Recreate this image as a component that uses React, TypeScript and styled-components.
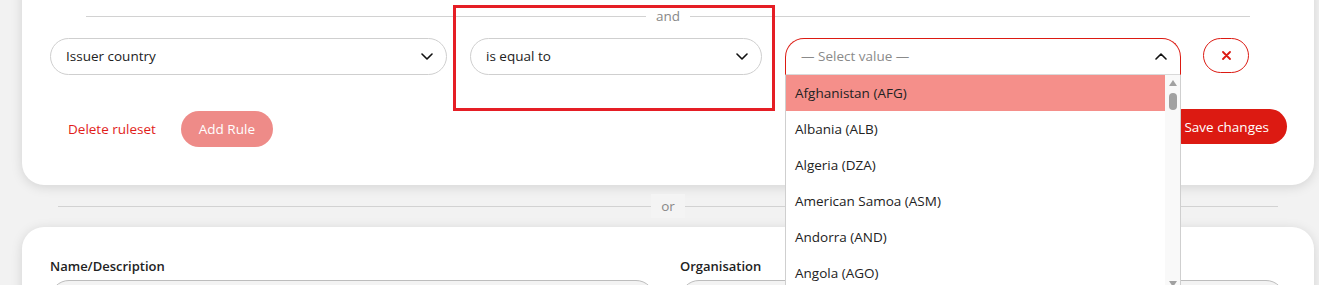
import React from "react";
import styled, { createGlobalStyle } from "styled-components";

const GlobalStyle = createGlobalStyle`
  html, body { margin: 0; padding: 0; background: #f2f2f2; }
  body { font-family: "Open Sans", "Noto Sans", sans-serif; font-size: 13.5px; color: #222; overflow: hidden; }
  * { box-sizing: border-box; }
`;

const RED = "#dc1a12";

const Page = styled.div`
  position: relative;
  width: 1319px;
  height: 285px;
  overflow: hidden;
`;

const Stack = styled.div`
  display: flex;
  flex-direction: column;
  margin-top: -30px;
  padding: 0 5px 0 22px;
`;

const Card = styled.section<{ $pt: number; $pb: number }>`
  background: #fff;
  border-radius: 22px;
  box-shadow: 0 2px 12px rgba(0, 0, 0, 0.13);
  padding: ${(p) => p.$pt}px 28px ${(p) => p.$pb}px 28px;
`;

const Divider = styled.div<{ $inset: number; $h: number }>`
  display: flex;
  align-items: center;
  height: ${(p) => p.$h}px;
  padding: 0 ${(p) => p.$inset}px;
  &::before, &::after {
    content: "";
    flex: 1;
    height: 1px;
    background: #d2d2d2;
  }
`;

const DividerLabel = styled.span<{ $bg: string }>`
  color: #888;
  font-size: 13.5px;
  line-height: 18px;
  padding: 3px 10px;
  background: ${(p) => p.$bg};
`;

const RuleRow = styled.div`
  display: flex;
  align-items: flex-start;
  gap: 23px;
  margin-top: 13px;
`;

const SelectBox = styled.div<{ $w: number; $open?: boolean }>`
  width: ${(p) => p.$w}px;
  height: 37px;
  display: flex;
  align-items: center;
  justify-content: space-between;
  padding: 0 13px 1px 15px;
  border: 1px solid ${(p) => (p.$open ? RED : "#cfcfcf")};
  border-bottom-color: ${(p) => (p.$open ? "#d9d9d9" : "#cfcfcf")};
  border-radius: ${(p) => (p.$open ? "19px 19px 0 0" : "19px")};
  background: #fff;
  color: #222;
  font-size: 13.5px;
`;

const Placeholder = styled.span`
  color: #8a8a8a;
`;

const SelectWrap = styled.div`
  position: relative;
  display: flex;
`;

const RemoveButton = styled.button`
  width: 46px;
  height: 35px;
  margin-left: -1px;
  border: 1px solid ${RED};
  border-radius: 18px;
  background: #fff;
  display: flex;
  align-items: center;
  justify-content: center;
  padding: 0;
`;

const Dropdown = styled.div`
  position: absolute;
  top: 100%;
  left: 0;
  width: 100%;
  height: 216px;
  display: flex;
  background: #fff;
  border-left: 1px solid #cfcfcf;
  border-right: 1px solid #cfcfcf;
  z-index: 5;
`;

const Options = styled.ul`
  flex: 1;
  margin: 0;
  padding: 0;
  list-style: none;
`;

const Option = styled.li<{ $active?: boolean }>`
  height: 36px;
  display: flex;
  align-items: center;
  padding-left: 9px;
  font-size: 13.5px;
  color: #222;
  background: ${(p) => (p.$active ? "#f58f8a" : "#fff")};
`;

const Scrollbar = styled.div`
  width: 15px;
  background: #f9f9f9;
  display: flex;
  flex-direction: column;
  align-items: center;
  padding: 5px 0 4px;
`;

const Thumb = styled.div`
  width: 8px;
  height: 17px;
  border-radius: 4px;
  background: #a1a1a1;
  margin-top: 7px;
`;

const ScrollSpacer = styled.div`
  flex: 1;
`;

const Actions = styled.div`
  display: flex;
  align-items: flex-start;
  margin-top: 34px;
`;

const LeftActions = styled.div`
  display: flex;
  align-items: center;
  gap: 7px;
  margin-top: 2px;
`;

const LinkButton = styled.button`
  border: 0;
  background: none;
  color: #e11d1a;
  font-family: inherit;
  font-size: 13.5px;
  padding: 0 18px;
  height: 36px;
`;

const PillButton = styled.button<{ $bg: string; $w: number; $h: number }>`
  border: 0;
  background: ${(p) => p.$bg};
  color: #fff;
  font-family: inherit;
  font-size: 13.5px;
  width: ${(p) => p.$w}px;
  height: ${(p) => p.$h}px;
  border-radius: 18px;
  padding: 0;
`;

const SaveButton = styled(PillButton)`
  margin-left: auto;
  margin-right: -1px;
  text-align: right;
  padding-right: 18px;
`;

const FieldGrid = styled.div`
  display: grid;
  grid-template-columns: 605px 605px;
  column-gap: 25px;
`;

const Field = styled.div`
  display: flex;
  flex-direction: column;
`;

const Label = styled.label`
  font-weight: 600;
  font-size: 13px;
  line-height: 18px;
  color: #222;
  margin-bottom: 5px;
`;

const Input = styled.div`
  height: 38px;
  border: 1px solid #bdbdbd;
  border-radius: 19px;
  background: #f3f3f3;
`;

const Annotation = styled.div`
  position: absolute;
  left: 453px;
  top: 5px;
  width: 322px;
  height: 106px;
  border: 3px solid #e51e25;
  pointer-events: none;
  z-index: 10;
`;

const Chevron = ({ up }: { up?: boolean }) => (
  <svg width="12" height="7" viewBox="0 0 12 7" fill="none">
    <polyline
      points={up ? "1,6 6,1 11,6" : "1,1 6,6 11,1"}
      stroke="#111"
      strokeWidth="1.6"
      strokeLinecap="round"
      strokeLinejoin="round"
    />
  </svg>
);

const Cross = () => (
  <svg width="9" height="9" viewBox="0 0 9 9">
    <path d="M1 1 L8 8 M8 1 L1 8" stroke={RED} strokeWidth="1.8" strokeLinecap="round" />
  </svg>
);

const Arrow = ({ down }: { down?: boolean }) => (
  <svg width="8" height="6" viewBox="0 0 8 6">
    <polygon points={down ? "0,0 8,0 4,6" : "4,0 8,6 0,6"} fill="#a1a1a1" />
  </svg>
);

const countries = [
  "Afghanistan (AFG)",
  "Albania (ALB)",
  "Algeria (DZA)",
  "American Samoa (ASM)",
  "Andorra (AND)",
  "Angola (AGO)",
];

export default function App() {
  return (
    <Page>
      <GlobalStyle />
      <Stack>
        <Card $pt={37} $pb={38}>
          <Divider $inset={36} $h={18}>
            <DividerLabel $bg="transparent">and</DividerLabel>
          </Divider>
          <RuleRow>
            <SelectBox $w={397}>
              <span>Issuer country</span>
              <Chevron />
            </SelectBox>
            <SelectBox $w={292}>
              <span>is equal to</span>
              <Chevron />
            </SelectBox>
            <SelectWrap>
              <SelectBox $w={396} $open>
                <Placeholder>— Select value —</Placeholder>
                <Chevron up />
              </SelectBox>
              <Dropdown>
                <Options>
                  {countries.map((c, i) => (
                    <Option key={c} $active={i === 0}>
                      {c}
                    </Option>
                  ))}
                </Options>
                <Scrollbar>
                  <Arrow />
                  <Thumb />
                  <ScrollSpacer />
                  <Arrow down />
                </Scrollbar>
              </Dropdown>
            </SelectWrap>
            <RemoveButton aria-label="Remove rule">
              <Cross />
            </RemoveButton>
          </RuleRow>
          <Actions>
            <LeftActions>
              <LinkButton>Delete ruleset</LinkButton>
              <PillButton $bg="#ee8b88" $w={92} $h={36}>
                Add Rule
              </PillButton>
            </LeftActions>
            <SaveButton $bg={RED} $w={122} $h={35}>
              Save changes
            </SaveButton>
          </Actions>
        </Card>
        <Divider $inset={36} $h={42}>
          <DividerLabel $bg="#f4f4f4">or</DividerLabel>
        </Divider>
        <Card $pt={30} $pb={20}>
          <FieldGrid>
            <Field>
              <Label>Name/Description</Label>
              <Input />
            </Field>
            <Field>
              <Label>Organisation</Label>
              <Input />
            </Field>
          </FieldGrid>
        </Card>
      </Stack>
      <Annotation />
    </Page>
  );
}
